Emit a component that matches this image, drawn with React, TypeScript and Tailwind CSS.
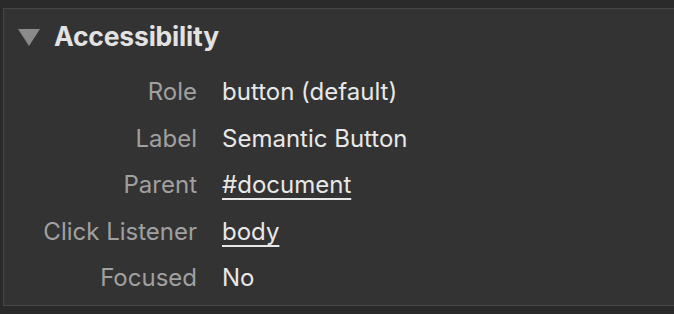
import React from "react";

const rows: { label: string; value: string; link?: boolean }[] = [
  { label: "Role", value: "button (default)" },
  { label: "Label", value: "Semantic Button" },
  { label: "Parent", value: "#document", link: true },
  { label: "Click Listener", value: "body", link: true },
  { label: "Focused", value: "No" },
];

export default function App() {
  return (
    <div
      className="w-[674px] h-[314px] bg-[#2a2a2a] pl-[3px] pt-[8px] pb-[8px] flex flex-col"
      style={{ fontFamily: "Inter, 'Noto Sans', sans-serif" }}
    >
      <div className="flex-1 flex flex-col bg-[#333333] border-l border-t border-b border-[#474747]">
        <div className="h-[56px] flex items-center">
          <svg width="22" height="17" viewBox="0 0 22 17" className="ml-[14px]">
            <polygon points="0,0 22,0 11,17" fill="#8a8a8a" />
          </svg>
          <span className="ml-[14px] text-[26.5px] font-bold text-[#e2e2e2] tracking-[-0.2px]">
            Accessibility
          </span>
        </div>
        <div className="pt-[4px] flex flex-col">
          {rows.map((r) => (
            <div key={r.label} className="h-[46.5px] grid grid-cols-[193px_1fr] gap-x-[25px] items-center text-[24px]">
              <span className="text-right text-[#a0a0a0]">{r.label}</span>
              <span
                className={
                  "text-[#e8e8e8] " +
                  (r.link ? "underline underline-offset-[5px] decoration-[1.5px]" : "")
                }
              >
                {r.value}
              </span>
            </div>
          ))}
        </div>
      </div>
    </div>
  );
}
